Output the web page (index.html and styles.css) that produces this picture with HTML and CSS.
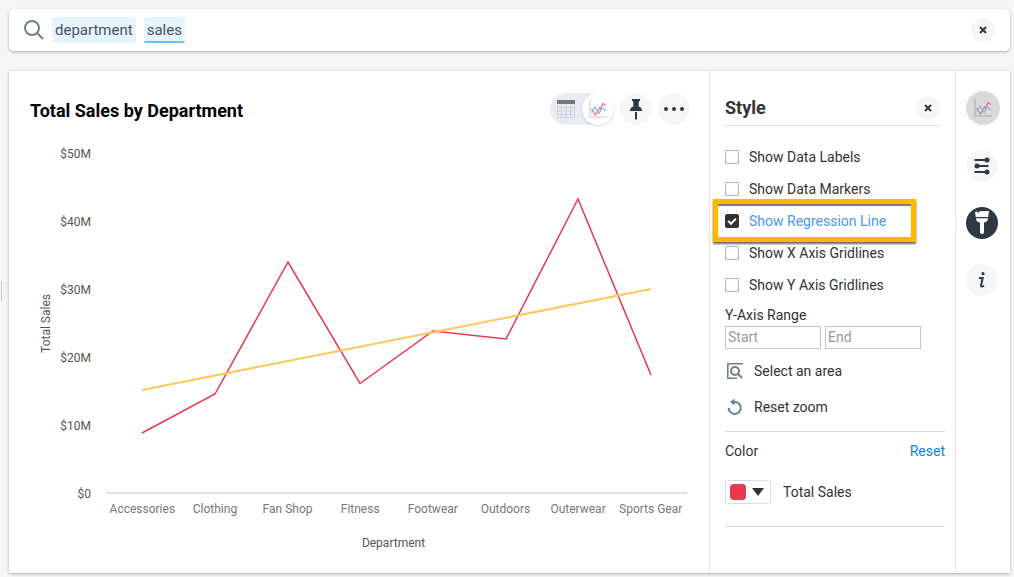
FILE: index.html
```html
<!DOCTYPE html>
<html lang="en">
<head>
<meta charset="utf-8">
<title>Total Sales by Department</title>
<link rel="stylesheet" href="styles.css">
</head>
<body>
<svg class="defs" aria-hidden="true">
  <symbol id="close" viewBox="0 0 8 8"><path d="M1 1l6 6M7 1L1 7" fill="none" stroke="#2d3945" stroke-width="2"/></symbol>
  <symbol id="linechart" viewBox="0 0 18 18">
    <path d="M1 0v17h17" fill="none" stroke="currentColor" stroke-width="1.600"/>
    <path d="M2.500 12.500L6 7l4 6.500L12.500 9l1.500-.5 3 2.500" fill="none" stroke="#72c4ec" stroke-width="1.300"/>
    <path d="M2.500 9l4 6L10.500 8l1 1L14 3.500l3 2" fill="none" stroke="#ee7287" stroke-width="1.300"/>
  </symbol>
</svg>
<form class="search">
  <svg class="search-icon" viewBox="0 0 20 20" aria-hidden="true"><circle cx="8" cy="8" r="7" fill="none" stroke="#707f8e" stroke-width="2"/><path d="M13 13l6 6" stroke="#707f8e" stroke-width="2"/></svg>
  <span class="token">department</span>
  <span class="token token-active">sales</span>
  <input class="search-input" type="text" aria-label="Search">
  <button class="round round-small" type="button" aria-label="Clear search"><svg class="close"><use href="#close"/></svg></button>
</form>
<main class="card">
  <section class="answer">
    <header class="answer-head">
      <h1 class="title">Total Sales by Department</h1>
      <div class="tools">
        <div class="toggle">
          <button class="toggle-item" type="button" aria-label="Table view">
            <svg class="icon18" viewBox="0 0 18 18"><path d="M.5 4v13.500h17V4M.5 7.500h17M.5 11h17M.5 14.500h17M4.500 4v13.500M9 4v13.500M13.500 4v13.500" fill="none" stroke="#d0d3d6"/><path d="M0 0h18v4H0z" fill="#777"/></svg>
          </button>
          <button class="toggle-item toggle-on" type="button" aria-label="Chart view"><svg class="icon18 pale"><use href="#linechart"/></svg></button>
        </div>
        <button class="round" type="button" aria-label="Pin"><svg class="pin" viewBox="0 0 12 21"><path d="M2 0h8v1.500L8.700 3v4.500C11 8.300 12 9.500 12 12H0c0-2.500 1-3.700 3.300-4.500V3L2 1.500zM5 13h2v7.500H5z" fill="#2d3945"/></svg></button>
        <button class="round" type="button" aria-label="More"><svg class="dots" viewBox="0 0 20 4" fill="#2d3945"><circle cx="2" cy="2" r="2"/><circle cx="10" cy="2" r="2"/><circle cx="18" cy="2" r="2"/></svg></button>
      </div>
    </header>
    <div class="chart">
      <div class="y-title">Total Sales</div>
      <div class="y-labels"><span>$50M</span><span>$40M</span><span>$30M</span><span>$20M</span><span>$10M</span><span>$0</span></div>
      <svg class="plot" viewBox="0 0 581 339" preserveAspectRatio="none" role="img" aria-label="Total sales by department with regression line">
        <polyline class="line sales" points="36,280 109,241 182,109 254,230.500 327,178 400,186 472,46 545,222"/>
        <polyline class="line trend" points="36,237 545,136"/>
      </svg>
      <div class="x-labels"><span>Accessories</span><span>Clothing</span><span>Fan Shop</span><span>Fitness</span><span>Footwear</span><span>Outdoors</span><span>Outerwear</span><span>Sports Gear</span></div>
      <div class="x-title">Department</div>
    </div>
  </section>
  <aside class="panel">
    <header class="panel-head"><h2 class="panel-title">Style</h2><button class="round round-small" type="button" aria-label="Close panel"><svg class="close"><use href="#close"/></svg></button></header>
    <div class="options">
      <label class="option"><input class="check" type="checkbox">Show Data Labels</label>
      <label class="option"><input class="check" type="checkbox">Show Data Markers</label>
      <label class="option option-on"><input class="check" type="checkbox" checked>Show Regression Line</label>
      <label class="option"><input class="check" type="checkbox">Show X Axis Gridlines</label>
      <label class="option"><input class="check" type="checkbox">Show Y Axis Gridlines</label>
    </div>
    <div class="range-label">Y-Axis Range</div>
    <div class="range"><input class="range-input" type="text" placeholder="Start" aria-label="Y-axis start"><input class="range-input" type="text" placeholder="End" aria-label="Y-axis end"></div>
    <button class="action" type="button"><svg class="action-icon" viewBox="0 0 16 16" fill="none" stroke="#707f8e" stroke-width="1.600"><path d="M16 .8H.8v14.400H10"/><circle cx="8" cy="8" r="4" stroke-width="2"/><path d="M11 11l4 4" stroke-width="2"/></svg>Select an area</button>
    <button class="action" type="button"><svg class="action-icon" viewBox="0 0 16 16"><path d="M6 3h2.500a6 6 0 1 1-6.800 6" fill="none" stroke="#707f8e" stroke-width="2"/><path d="M7.500-.5v7L3 3z" fill="#707f8e"/></svg>Reset zoom</button>
    <div class="color">
      <div class="color-head"><span>Color</span><a class="reset" href="#reset">Reset</a></div>
      <div class="color-row"><button class="swatch-button" type="button" aria-label="Total Sales color"><span class="swatch"></span><svg class="caret" viewBox="0 0 12 8"><path d="M0 0h12L6 8z" fill="#333"/></svg></button><span>Total Sales</span></div>
    </div>
  </aside>
  <nav class="rail" aria-label="Chart tools">
    <button class="round rail-chart" type="button" aria-label="Change visualization"><svg class="icon18 dim"><use href="#linechart"/></svg></button>
    <button class="round" type="button" aria-label="Configure"><svg class="icon18" viewBox="0 0 18 18" stroke="#2d3945" stroke-width="2" fill="#2d3945"><path d="M1.500 3H14M4 9h11.500M1.500 15H14"/><circle cx="14" cy="3" r="1.500"/><circle cx="4" cy="9" r="1.500"/><circle cx="14" cy="15" r="1.500"/></svg></button>
    <button class="round rail-style" type="button" aria-label="Style"><svg class="brush" viewBox="0 0 14 24" fill="#fff"><path d="M0 1l2.500-.5.500 2L4.500.3 14 0l-.8 6H.8zM1 7.200h12c0 2.800-1.500 3.800-4 4.300V22q-2 2-4 0V11.500C2.500 11 1 10 1 7.200z"/></svg></button>
    <button class="round" type="button" aria-label="Information"><svg class="info" viewBox="0 0 8 16" fill="none" stroke="#2d3945"><circle cx="5" cy="1.700" r="1.600" fill="#2d3945" stroke="none"/><path d="M1 6h3.700L3 13.500c-.2 1 1 1.300 3 .3" stroke-width="2"/></svg></button>
  </nav>
</main>
<div class="drag-handle"></div>
</body>
</html>
```
FILE: styles.css
```css
*, *::before, *::after { box-sizing: border-box; }
html { height: 100%; }
body {
  display: flex;
  flex-direction: column;
  gap: 20px;
  min-height: 100%;
  margin: 0;
  padding: 9px 4px 5px 9px;
  background: #f6f6f6;
  color: #333;
  font: 14px/20px Roboto, "Liberation Sans", sans-serif;
}
button, input { font: inherit; color: inherit; margin: 0; }
button { border: 0; padding: 0; background: none; cursor: pointer; }
svg { display: block; }
.defs { position: absolute; width: 0; height: 0; }

.search {
  display: flex;
  align-items: center;
  gap: 8px;
  height: 42px;
  padding: 0 15px;
  border-radius: 5px;
  background: #fff;
  box-shadow: 0 1px 3px rgba(0, 0, 0, .3);
}
.search-icon { width: 20px; height: 20px; }
.token {
  height: 26px;
  padding: 0 3px;
  border-radius: 2px;
  background: #e5f4fe;
  color: #4b5361;
  font-size: 15px;
  line-height: 26px;
}
.token-active { border-bottom: 2px solid #71bdf7; }
.search-input { flex: 1; min-width: 0; border: 0; outline: 0; background: none; }

.round {
  display: grid;
  place-items: center;
  flex: none;
  width: 32px;
  height: 32px;
  border-radius: 50%;
  background: #f6f6f6;
}
.round-small { width: 24px; height: 24px; }
.close { width: 8px; height: 8px; }
.icon18 { width: 18px; height: 18px; }
.pale { color: #ddd; }
.dim { color: #bbb; }

.card {
  display: flex;
  flex: 1;
  background: #fff;
  box-shadow: 0 1px 3px rgba(0, 0, 0, .3);
}
.answer {
  display: flex;
  flex: 1;
  flex-direction: column;
  min-width: 0;
  padding: 22px 19px 22px 21px;
}
.answer-head { display: flex; align-items: center; justify-content: space-between; height: 32px; }
.title { margin: 0; padding-top: 4px; color: #000; font-size: 18px; line-height: 24px; }
.tools { display: flex; gap: 6px; }
.toggle { display: flex; border-radius: 16px; background: #e9edf1; }
.toggle-item { display: grid; place-items: center; width: 32px; height: 32px; }
.toggle-on { border-radius: 50%; background: #fff; box-shadow: 0 1px 3px rgba(0, 0, 0, .15); }
.pin { width: 12px; height: 21px; }
.dots { width: 20px; height: 4px; }

.chart {
  display: grid;
  flex: 1;
  grid-template-columns: 16px 37px 1fr;
  grid-template-rows: minmax(200px, 1fr) auto auto;
  padding: 20px 3px 0 8px;
  color: #555;
  font-size: 12px;
  line-height: 16px;
}
.y-title { align-self: center; padding-bottom: 8px; writing-mode: vertical-rl; transform: rotate(180deg); }
.y-labels {
  display: flex;
  flex-direction: column;
  justify-content: space-between;
  margin: 1px 0 -8px;
  text-align: right;
}
.plot {
  width: calc(100% - 15px);
  height: calc(100% - 8px);
  margin: 8px 0 0 15px;
  border-bottom: 2px solid #e0e0e0;
}
.line { fill: none; vector-effect: non-scaling-stroke; }
.sales { stroke: #e8384f; stroke-width: 1.5; }
.trend { stroke: #fbc95b; stroke-width: 2; }
.x-labels {
  display: grid;
  grid-column: 3;
  grid-template-columns: repeat(8, minmax(0, 1fr));
  margin: 7px 0 0 15px;
  color: #777;
  text-align: center;
  white-space: nowrap;
}
.x-title { grid-column: 3; margin: 18px 0 0 9px; text-align: center; }

.panel { width: 247px; padding: 25px 10px 0 15px; border-left: 1px solid #e3e3e3; border-right: 1px solid #e8e8e8; }
.panel-head {
  display: flex;
  align-items: center;
  justify-content: space-between;
  height: 30px;
  margin-right: 5px;
  padding-bottom: 5px;
  border-bottom: 1px solid #e5e5e5;
}
.panel-title { margin: 0; font-size: 18px; line-height: 24px; }
.options { position: relative; margin-top: 15px; }
.options::after {
  content: "";
  position: absolute;
  top: 58px;
  left: -12px;
  width: 203px;
  height: 43px;
  border: 5px solid #fdb900;
  box-shadow: 0 2px 2px #666, inset 0 2px 1px #777;
  pointer-events: none;
}
.option { display: flex; align-items: center; gap: 10px; height: 32px; }
.option-on { color: #4a98f0; }
.check {
  appearance: none;
  width: 14px;
  height: 14px;
  border: 1px solid #b3b3b3;
  border-radius: 1px;
  background: #fff;
}
.check:checked { display: grid; place-items: center; border-color: #333; border-radius: 2px; background: #333; }
.check:checked::after {
  content: "";
  width: 8px;
  height: 5px;
  margin-bottom: 2px;
  border: solid #fff;
  border-width: 0 0 2px 2px;
  transform: rotate(-45deg);
}
.range-label { margin-top: 4px; }
.range { display: flex; gap: 4px; margin: 1px 0 4px; }
.range-input { width: 96px; height: 23px; padding: 0 2px 2px; border: 1px solid #c4c4c4; outline: 0; background: #fff; }
.range-input::placeholder { color: #999; opacity: 1; }
.action { display: flex; align-items: center; gap: 11px; width: 100%; height: 36px; padding-left: 2px; }
.action-icon { width: 16px; height: 16px; overflow: visible; }
.color { margin-top: 6px; padding: 9px 0 22px; border-top: 1px solid #d9d9d9; border-bottom: 1px solid #d9d9d9; }
.color-head { display: flex; justify-content: space-between; }
.reset { color: #0a84dd; text-decoration: none; }
.color-row { display: flex; align-items: center; gap: 12px; margin-top: 19px; }
.swatch-button {
  display: flex;
  align-items: center;
  gap: 6px;
  width: 46px;
  height: 24px;
  padding: 0 4px;
  border: 1px solid #ddd;
  border-radius: 3px;
}
.swatch { width: 16px; height: 16px; border-radius: 4px; background: #e8384f; }
.caret { width: 12px; height: 8px; }

.rail { display: flex; flex-direction: column; align-items: flex-start; gap: 25px; width: 54px; padding: 20px 10px 0; }
.rail-chart { width: 34px; height: 34px; background: #dadada; }
.rail-style { background: #2d3945; }
.brush { width: 14px; height: 24px; }
.info { width: 8px; height: 16px; }

.drag-handle { position: absolute; top: calc(50% - 8px); left: 1px; width: 1px; height: 20px; background: #ccc; }
```
